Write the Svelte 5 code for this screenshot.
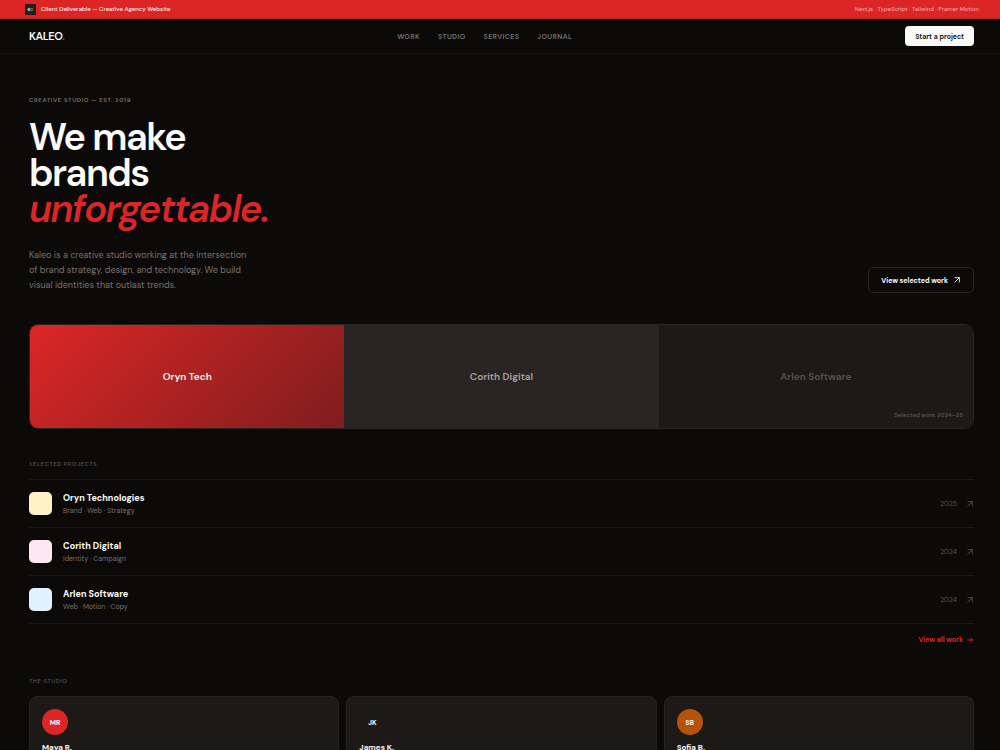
<script>
  const links = ['Work', 'Studio', 'Services', 'Journal'];
  const projects = [
    { name: 'Oryn Technologies', tags: 'Brand · Web · Strategy', year: '2025', color: '#fef3c7' },
    { name: 'Corith Digital', tags: 'Identity · Campaign', year: '2024', color: '#fce7f3' },
    { name: 'Arlen Software', tags: 'Web · Motion · Copy', year: '2024', color: '#e0f2fe' }
  ];
  const team = [
    { initials: 'MR', name: 'Maya R.', color: '#dc2626' },
    { initials: 'JK', name: 'James K.', color: '#1c1917' },
    { initials: 'SB', name: 'Sofia B.', color: '#b45309' }
  ];
</script>

{#snippet diagonal()}
  <svg class="arrow" viewBox="0 0 8 8" aria-hidden="true"><path d="M2 1.7h4.3V6M6.3 1.7L1.8 6.2" /></svg>
{/snippet}

<div class="page">
  <div class="banner">
    <svg class="mark" viewBox="0 0 11 11" aria-hidden="true">
      <rect width="11" height="11" fill="#1c1f24" />
      <circle cx="4.1" cy="5.5" r="1.3" fill="#8b8d90" stroke="#d6d6d6" stroke-width=".7" />
      <circle cx="7" cy="5.5" r="1.2" fill="none" stroke="#b8662c" stroke-width=".8" />
    </svg>
    <strong>Client Deliverable — Creative Agency Website</strong>
    <span class="stack">Next.js · TypeScript · Tailwind · Framer Motion</span>
  </div>

  <header>
    <a class="logo" href="#top">KALEO<span>.</span></a>
    <nav>
      {#each links as link}
        <a href="#{link.toLowerCase()}">{link}</a>
      {/each}
    </nav>
    <button class="start">Start a project</button>
  </header>

  <main>
    <section class="hero">
      <p class="eyebrow">Creative studio — Est. 2019</p>
      <h1>We make<br />brands<br /><em>unforgettable.</em></h1>
      <div class="intro">
        <p>
          Kaleo is a creative studio working at the intersection<br />
          of brand strategy, design, and technology. We build<br />
          visual identities that outlast trends.
        </p>
        <button class="view">View selected work {@render diagonal()}</button>
      </div>
    </section>

    <section class="gallery">
      <div class="tile red">Oryn Tech</div>
      <div class="tile gray">Corith Digital</div>
      <div class="tile dark">Arlen Software</div>
      <span class="caption">Selected work 2024–25</span>
    </section>

    <section class="projects" id="work">
      <h2>Selected projects</h2>
      <ul>
        {#each projects as project}
          <li>
            <span class="swatch" style="background: {project.color}"></span>
            <div class="info">
              <h3>{project.name}</h3>
              <p>{project.tags}</p>
            </div>
            <span class="year">{project.year}</span>
            {@render diagonal()}
          </li>
        {/each}
      </ul>
      <a class="all" href="#work">
        View all work
        <svg class="arrow" viewBox="0 0 8 8" aria-hidden="true"><path d="M1.5 4h5M4.5 2l2 2-2 2" /></svg>
      </a>
    </section>

    <section class="studio" id="studio">
      <h2>The studio</h2>
      <div class="cards">
        {#each team as person}
          <article>
            <span class="avatar" style="background: {person.color}">{person.initials}</span>
            <h3>{person.name}</h3>
          </article>
        {/each}
      </div>
    </section>
  </main>
</div>

<style>
  :global(body) {
    margin: 0;
    background: #0c0a09;
  }
  .page {
    height: 100vh;
    overflow: hidden;
    background: #0c0a09;
    color: #fafaf9;
    font-family: 'DM Sans', Inter, 'Open Sans', sans-serif;
    font-size: 8px;
  }
  .page * {
    box-sizing: border-box;
  }
  h1, h2, h3, p, ul {
    margin: 0;
    padding: 0;
  }
  a {
    color: inherit;
    text-decoration: none;
  }
  button {
    font: inherit;
    cursor: pointer;
  }
  .arrow {
    width: 8px;
    height: 8px;
    flex: none;
    fill: none;
    stroke: currentColor;
    stroke-width: 0.9;
    stroke-linecap: round;
    stroke-linejoin: round;
  }
  .banner {
    display: flex;
    align-items: center;
    gap: 5px;
    height: 19px;
    padding: 0 21px 0 25px;
    background: #dc2626;
    border-bottom: 1px solid #b91c1c;
    font-size: 6px;
  }
  .banner strong {
    font-weight: 500;
    color: #fff1f1;
  }
  .mark {
    width: 11px;
    height: 11px;
  }
  .stack {
    margin-left: auto;
    color: #f6b3b3;
  }
  header {
    display: flex;
    justify-content: space-between;
    align-items: center;
    height: 35px;
    padding: 0 26px 0 29px;
    border-bottom: 1px solid #161412;
  }
  .logo {
    font-size: 11px;
    font-weight: 600;
    letter-spacing: -0.04em;
  }
  .logo span {
    color: #dc2626;
  }
  nav {
    display: flex;
    gap: 18px;
    color: #78716c;
    font-size: 7px;
    font-weight: 600;
    letter-spacing: 0.06em;
    text-transform: uppercase;
  }
  .start {
    height: 20px;
    padding: 0 10px;
    border: 0;
    border-radius: 4px;
    background: #fafaf9;
    color: #0c0a09;
    font-size: 7px;
    font-weight: 600;
  }
  main {
    padding: 42px 26px 0 29px;
  }
  .eyebrow {
    color: #78716c;
    font-size: 6px;
    font-weight: 600;
    line-height: 8px;
    letter-spacing: 0.1em;
    text-transform: uppercase;
  }
  h1 {
    margin-top: 15px;
    font-size: 38px;
    font-weight: 600;
    line-height: 36px;
    letter-spacing: -0.04em;
  }
  h1 em {
    color: #dc2626;
  }
  .intro {
    display: flex;
    align-items: flex-end;
    justify-content: space-between;
    margin-top: 21px;
  }
  .intro p {
    color: #78716c;
    font-size: 9px;
    line-height: 15px;
  }
  .view {
    display: flex;
    align-items: center;
    gap: 5px;
    height: 26px;
    padding: 0 12px;
    border: 1px solid #292524;
    border-radius: 5px;
    background: transparent;
    color: #fafaf9;
    font-size: 7px;
    font-weight: 700;
  }
  .gallery {
    position: relative;
    display: grid;
    grid-template-columns: repeat(3, 1fr);
    height: 105px;
    margin-top: 31px;
    overflow: hidden;
    border: 1px solid #292524;
    border-radius: 9px;
  }
  .tile {
    display: grid;
    place-items: center;
    font-size: 10px;
    font-weight: 600;
  }
  .red {
    background: linear-gradient(135deg, #dc2626, #7f1d1d);
  }
  .gray {
    background: #292524;
    color: #a8a29e;
  }
  .dark {
    background: #1c1917;
    color: #57534e;
  }
  .caption {
    position: absolute;
    right: 10px;
    bottom: 9px;
    color: #57534e;
    font-size: 6px;
    font-weight: 600;
  }
  h2 {
    color: #57534e;
    font-size: 6px;
    font-weight: 500;
    line-height: 8px;
    letter-spacing: 0.08em;
    text-transform: uppercase;
  }
  .projects {
    margin-top: 31px;
  }
  ul {
    margin-top: 11px;
    border-top: 1px solid #1c1917;
    list-style: none;
  }
  li {
    display: flex;
    align-items: center;
    height: 48px;
    border-bottom: 1px solid #1c1917;
    color: #57534e;
  }
  .swatch {
    width: 23px;
    height: 23px;
    margin-right: 11px;
    border-radius: 5px;
  }
  .info {
    flex: 1;
  }
  h3 {
    color: #fafaf9;
    font-size: 9px;
    font-weight: 700;
    line-height: 14px;
  }
  .info p {
    color: #78716c;
    font-size: 7px;
    line-height: 11px;
  }
  .year {
    margin-right: 9px;
    font-size: 7px;
  }
  .all {
    display: flex;
    align-items: center;
    justify-content: flex-end;
    gap: 3px;
    margin-top: 11px;
    color: #dc2626;
    font-size: 7px;
    font-weight: 700;
    line-height: 10px;
  }
  .studio {
    margin-top: 32px;
  }
  .cards {
    display: grid;
    grid-template-columns: repeat(3, 1fr);
    gap: 7px;
    margin-top: 11px;
  }
  article {
    padding: 12px 12px 24px;
    border: 1px solid #262220;
    border-radius: 8px;
    background: #1c1917;
  }
  .avatar {
    display: grid;
    place-items: center;
    width: 26px;
    height: 26px;
    border-radius: 50%;
    font-size: 7px;
    font-weight: 700;
  }
  article h3 {
    margin-top: 5px;
    font-size: 8px;
  }
</style>
